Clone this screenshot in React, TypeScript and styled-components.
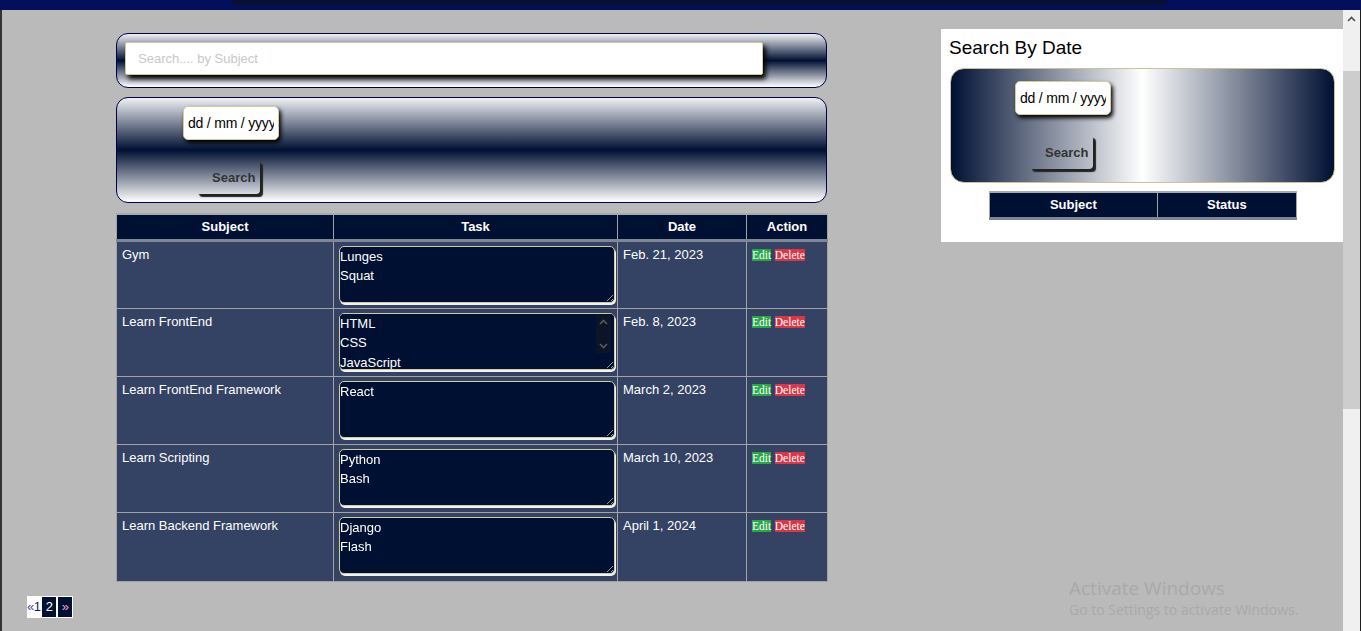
import React from "react";
import styled, { createGlobalStyle } from "styled-components";

// colours
const NAVY = "#001033";
const ROW = "#344264";
const GRID = "#a3a3a3";

interface ITask {
  subject: string;
  tasks: string;
  date: string;
}

const TASKS: ITask[] = [
  { subject: "Gym", tasks: "Lunges\nSquat", date: "Feb. 21, 2023" },
  { subject: "Learn FrontEnd", tasks: "HTML\nCSS\nJavaScript", date: "Feb. 8, 2023" },
  { subject: "Learn FrontEnd Framework", tasks: "React", date: "March 2, 2023" },
  { subject: "Learn Scripting", tasks: "Python\nBash", date: "March 10, 2023" },
  { subject: "Learn Backend Framework", tasks: "Django\nFlash", date: "April 1, 2024" },
];

const GlobalStyle = createGlobalStyle`
  html, body {
    margin: 0;
    padding: 0;
    overflow: hidden;
  }
  body {
    font-family: "Liberation Sans", Arial, sans-serif;
    font-size: 13px;
    background: #bababa;
  }
  * {
    box-sizing: border-box;
  }
`;

const Page = styled.div`
  display: flex;
  flex-direction: column;
  width: 1361px;
  height: 631px;
`;

const TopBar = styled.header`
  flex-shrink: 0;
  height: 10px;
  padding-left: 232px;
  background: #040f5c;
`;
const TopStrip = styled.div`
  width: 935px;
  height: 5px;
  background: #0a0f34;
  border-radius: 0 0 4px 0;
`;

const Body = styled.div`
  flex: 1;
  display: flex;
  min-height: 0;
`;
const Edge = styled.div`
  width: 2px;
  background: #343434;
`;
const Content = styled.main`
  position: relative;
  flex: 1;
  display: flex;
  flex-direction: column;
  overflow: hidden;
  background: #bababa;
`;
const Columns = styled.div`
  display: flex;
  align-items: flex-start;
`;
const LeftCol = styled.section`
  display: flex;
  flex-direction: column;
  width: 711px;
  margin: 23px 0 0 114px;
`;

// search boxes
const VerticalBox = styled.div<{ $pad: string; $gap?: number }>`
  margin-top: ${(p) => p.$gap ?? 0}px;
  padding: ${(p) => p.$pad};
  border: 1px solid #00004d;
  border-radius: 12px;
  background: linear-gradient(to bottom, #f0f1f4 0%, ${NAVY} 50%, #ffffff 100%);
`;
const HorizontalBox = styled.div`
  padding: 12px 0 13px 64px;
  border: 1px solid #c9c592;
  border-radius: 14px;
  background: linear-gradient(to right, ${NAVY} 0%, #ffffff 50%, ${NAVY} 100%);
`;
const SubjectInput = styled.input`
  display: block;
  width: 638px;
  height: 33px;
  padding: 0 12px;
  border: 1px solid #cfcb98;
  border-radius: 2px;
  background: #fff;
  box-shadow: 3px 4px 5px #000;
  font: 13px "Liberation Sans", Arial, sans-serif;
  outline: none;

  &::placeholder {
    color: #c8c8c8;
  }
`;
const DateInput = styled.input`
  display: block;
  width: 96px;
  height: 34px;
  padding: 0 4px;
  border: 1px solid #d2ce9c;
  border-radius: 5px;
  background: #fff;
  box-shadow: 2px 3px 4px #000;
  font: 14px "Liberation Sans", Arial, sans-serif;
  letter-spacing: -0.2px;
  outline: none;

  &::placeholder {
    color: #000;
  }
`;
const SearchButton = styled.button<{ $top: number; $left: number }>`
  display: block;
  width: 64px;
  height: 34px;
  margin: ${(p) => p.$top}px 0 0 ${(p) => p.$left}px;
  padding: 0 4px 0 16px;
  border: none;
  border-radius: 4px;
  background: transparent;
  box-shadow: 3px 3px 1px #222;
  color: #333;
  font: bold 13px "Liberation Sans", Arial, sans-serif;
  text-align: left;
`;

// tables
const Table = styled.table<{ $width: string; $gap: number }>`
  width: ${(p) => p.$width};
  margin: ${(p) => p.$gap}px auto 0;
  border-collapse: collapse;
  table-layout: fixed;
`;
const Th = styled.th`
  height: 26px;
  padding: 0 4px;
  border-top: 2px solid #a6aab3;
  border-bottom: 3px solid #7e8698;
  border-left: 1px solid ${GRID};
  border-right: 1px solid ${GRID};
  background: ${NAVY};
  color: #fff;
  font-size: 13px;
  font-weight: bold;
  text-align: center;
`;
const Td = styled.td`
  height: 68px;
  padding: 4px 5px 5px;
  border: 1px solid ${GRID};
  background: ${ROW};
  color: #fff;
  vertical-align: top;
  font-size: 13px;
  line-height: 17px;

  tr:last-child > & {
    height: 69px;
  }
`;
const TaskWrap = styled.div`
  position: relative;
  width: 276px;
`;
const TaskArea = styled.textarea`
  display: block;
  width: 276px;
  height: 57px;
  padding: 0;
  border: 1px solid #cfcca0;
  border-radius: 5px;
  background: ${NAVY};
  box-shadow: 1px 2px 0 #f2f2f2;
  color: #fff;
  font: 13px/1.5 "Liberation Sans", Arial, sans-serif;
  outline: none;
`;
// textarea scroll arrows, drawn over the overflowing box
const ScrollHint = styled.div`
  position: absolute;
  top: 2px;
  right: 4px;
  display: flex;
  flex-direction: column;
  align-items: center;
  justify-content: space-between;
  width: 15px;
  height: 38px;
  padding: 4px 0;
  background: #0c1428;
  pointer-events: none;
`;
const ActionTag = styled.a<{ $kind: "edit" | "delete" }>`
  background: ${(p) => (p.$kind === "edit" ? "#28a745" : "#dc3545")};
  color: #fff;
  font: 11.5px "Liberation Serif", "Times New Roman", serif;
  text-decoration: none;
  cursor: pointer;
`;

// side panel
const SidePanel = styled.aside`
  width: 402px;
  margin: 19px 0 0 auto;
  padding: 8px 8px 22px 9px;
  background: #fff;
`;
const PanelTitle = styled.h3`
  margin: 0 0 9px -1px;
  color: #000;
  font-size: 19px;
  font-weight: normal;
  line-height: 22px;
`;

// pagination
const Pager = styled.nav`
  align-self: flex-start;
  display: flex;
  align-items: center;
  gap: 2px;
  margin: 14px 0 0 25px;
  padding: 1px 1px 1px 0;
  background: #fff;
  font: 13px "Liberation Sans", Arial, sans-serif;
`;
const PageText = styled.span`
  color: #0b1a6e;
  letter-spacing: -0.5px;

  & .arrow {
    color: #3b4ba6;
  }
`;
const PageBox = styled.a<{ $color: string }>`
  display: flex;
  align-items: center;
  justify-content: center;
  width: 14px;
  height: 20px;
  background: ${NAVY};
  color: ${(p) => p.$color};
  text-decoration: none;
`;

// window chrome
const ScrollRail = styled.div`
  display: flex;
  flex-direction: column;
  align-items: center;
  width: 18px;
  background: #f0f0f0;
  border-right: 1px solid #1e1e1e;
`;
const RailArrow = styled.div`
  display: flex;
  align-items: center;
  justify-content: center;
  height: 17px;
`;
const RailThumb = styled.div`
  width: 100%;
  height: 338px;
  margin-top: 44px;
  background: #cdcdcd;
`;
const Watermark = styled.div`
  position: absolute;
  left: 1067px;
  top: 566px;
  color: #a9a9a9;
  font-family: "Open Sans", "Noto Sans", sans-serif;
  pointer-events: none;

  & .wm-title {
    font-size: 19px;
    line-height: 24px;
  }
  & .wm-sub {
    font-size: 14px;
    line-height: 20px;
  }
`;

const Chevron = ({ up, color = "#5a5a5a" }: { up?: boolean; color?: string }) => (
  <svg width="9" height="6" viewBox="0 0 9 6">
    <path
      d={up ? "M1 5 L4.5 1.5 L8 5" : "M1 1 L4.5 4.5 L8 1"}
      fill="none"
      stroke={color}
      strokeWidth="1.6"
    />
  </svg>
);

const App = () => {
  return (
    <Page>
      <GlobalStyle />
      <TopBar>
        <TopStrip />
      </TopBar>

      <Body>
        <Edge />
        <Content>
          <Columns>
            <LeftCol>
              <VerticalBox $pad="8px 0 12px 8px">
                <SubjectInput placeholder="Search.... by Subject" />
              </VerticalBox>

              <VerticalBox $pad="8px 0 8px 66px" $gap={9}>
                <DateInput placeholder="dd / mm / yyyy" />
                <SearchButton $top={20} $left={13}>
                  Search
                </SearchButton>
              </VerticalBox>

              <Table $width="711px" $gap={10}>
                <colgroup>
                  <col style={{ width: 217 }} />
                  <col style={{ width: 284 }} />
                  <col style={{ width: 129 }} />
                  <col style={{ width: 81 }} />
                </colgroup>
                <thead>
                  <tr>
                    <Th>Subject</Th>
                    <Th>Task</Th>
                    <Th>Date</Th>
                    <Th>Action</Th>
                  </tr>
                </thead>
                <tbody>
                  {TASKS.map((task) => (
                    <tr key={task.subject}>
                      <Td>{task.subject}</Td>
                      <Td>
                        <TaskWrap>
                          <TaskArea defaultValue={task.tasks} />
                          {task.tasks.split("\n").length > 2 && (
                            <ScrollHint>
                              <Chevron up />
                              <Chevron />
                            </ScrollHint>
                          )}
                        </TaskWrap>
                      </Td>
                      <Td>{task.date}</Td>
                      <Td>
                        <ActionTag $kind="edit">Edit</ActionTag>{" "}
                        <ActionTag $kind="delete">Delete</ActionTag>
                      </Td>
                    </tr>
                  ))}
                </tbody>
              </Table>
            </LeftCol>

            <SidePanel>
              <PanelTitle>Search By Date</PanelTitle>
              <HorizontalBox>
                <DateInput placeholder="dd / mm / yyyy" />
                <SearchButton $top={20} $left={14}>
                  Search
                </SearchButton>
              </HorizontalBox>
              <Table $width="80%" $gap={8}>
                <colgroup>
                  <col style={{ width: "55%" }} />
                  <col style={{ width: "45%" }} />
                </colgroup>
                <thead>
                  <tr>
                    <Th>Subject</Th>
                    <Th>Status</Th>
                  </tr>
                </thead>
              </Table>
            </SidePanel>
          </Columns>

          <Pager>
            <PageText>
              <span className="arrow">«</span>1
            </PageText>
            <PageBox $color="#fff">2</PageBox>
            <PageBox $color="#f3a9c0">»</PageBox>
          </Pager>

          <Watermark>
            <div className="wm-title">Activate Windows</div>
            <div className="wm-sub">Go to Settings to activate Windows.</div>
          </Watermark>
        </Content>

        <ScrollRail>
          <RailArrow>
            <Chevron up color="#505050" />
          </RailArrow>
          <RailThumb />
        </ScrollRail>
      </Body>
    </Page>
  );
};

export default App;
